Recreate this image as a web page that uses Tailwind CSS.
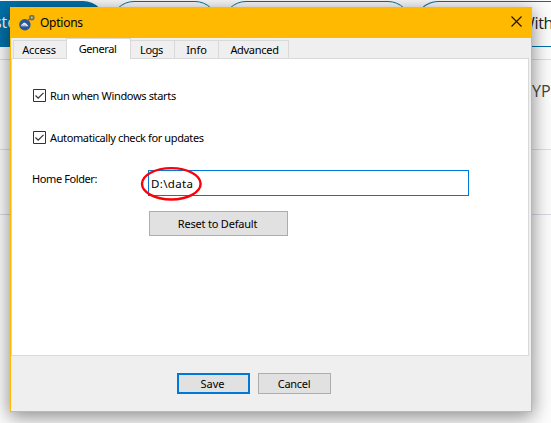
<!DOCTYPE html>
<html lang="en">
<head>
<meta charset="utf-8">
<title>Options</title>
<script src="https://cdn.jsdelivr.net/npm/@tailwindcss/browser@4"></script>
</head>
<body class="relative w-[551px] h-[423px] overflow-hidden bg-white font-['Noto_Sans',sans-serif] text-[11px] leading-4 text-black">
<!-- page behind the dialog -->
<div class="flex flex-col h-full bg-[#fdfdfd] overflow-hidden">
  <div class="flex h-[60px] shrink-0 pt-px border-b border-[#dddfe3] text-base leading-[43px] font-['Open_Sans',sans-serif]">
    <div class="w-[106px] h-[46px] shrink-0 rounded-r-full bg-[#0072ab] text-white overflow-hidden whitespace-nowrap"><span class="block -ml-[25px]">Caste</span></div>
    <div class="w-[107px] h-[46px] shrink-0 ml-[5px] rounded-full border border-[#0072ab]"></div>
    <div class="w-[188px] h-[46px] shrink-0 ml-[5px] rounded-full border border-[#0072ab]"></div>
    <div class="w-[136px] h-[46px] shrink-0 ml-1 rounded-l-full border-y border-l border-[#0072ab] pl-[104px] text-[#222] tracking-[-0.3px]">With</div>
  </div>
  <div class="h-[90px] shrink-0 border-b border-[#dddfe3] pt-[21px] pl-[532px] text-base leading-5 font-['Open_Sans',sans-serif] text-[#444]">YP</div>
  <div class="h-[65px] shrink-0 border-b border-[#d9d9e5]"></div>
  <div class="grow"></div>
</div>

<!-- dialog window -->
<div class="absolute left-[10px] top-[7px] w-[522px] h-[405px] flex flex-col border border-[#ffb900] bg-[#efefef] shadow-[0_4px_18px_1px_rgba(0,0,0,0.45)]">
  <div class="flex items-center h-[30px] shrink-0 bg-[#ffb900] pl-2 pr-[9px]">
    <svg class="w-4 h-4 shrink-0" viewBox="0 0 16 16" fill="none">
      <circle cx="5.9" cy="9.8" r="5.7" fill="#28579b"/>
      <path d="M2.2 10 5 7.4l2.2 1 2.3 2.8H2.5Z" fill="#e9f1fa"/>
      <path d="m2.8 10.9 2-1 1.3.7 1-.6" stroke="#7399c8" stroke-width=".8"/>
      <path d="m8.6 6 2-1.8" stroke="#6d6a50" stroke-width="1.6"/>
      <circle cx="12.8" cy="2.6" r="2" stroke="#66716c" stroke-width="1.7"/>
    </svg>
    <span class="ml-[5px] text-[12px] tracking-[-0.25px]">Options</span>
    <svg class="ml-auto w-[11px] h-[11px] mb-[3px]" viewBox="0 0 11 11" fill="none" stroke="#171200" stroke-width="1.1"><path d="m.5.5 10 10m0-10-10 10"/></svg>
  </div>
  <div class="flex items-end h-5 shrink-0 pl-0.5 text-center whitespace-nowrap">
    <div class="w-[53px] h-[18px] border-t border-l border-[#d9d9d9] leading-[18px] tracking-[-0.1px] pr-0.5">Access</div>
    <div class="relative z-10 w-[65px] h-[21px] -mb-px border-t border-x border-[#d9d9d9] bg-white leading-[20px] tracking-[-0.4px] pr-0.5">General</div>
    <div class="w-[43px] h-[18px] border-t border-[#d9d9d9] leading-[18px] tracking-[-0.35px] pr-0.5">Logs</div>
    <div class="w-[44px] h-[18px] border-t border-l border-[#d9d9d9] leading-[18px] tracking-[-0.1px]">Info</div>
    <div class="w-[71px] h-[18px] border-t border-x border-[#d9d9d9] leading-[18px] tracking-[-0.3px] pl-0.5">Advanced</div>
  </div>
  <div class="h-[298px] shrink-0 mr-[2px] border border-[#d9d9d9] bg-white pl-[21px] pt-[29px]">
    <div class="flex items-center h-[15px]">
      <svg class="w-[13px] h-[13px]" viewBox="0 0 13 13" fill="none" stroke="#333"><path d="M.5.5h12v12H.5z"/><path d="m2.5 6.5 2.7 2.7 5.3-5.4" stroke-width="1.2"/></svg>
      <span class="ml-1 tracking-[-0.34px]">Run when Windows starts</span>
    </div>
    <div class="flex items-center h-[15px] mt-[27px]">
      <svg class="w-[13px] h-[13px]" viewBox="0 0 13 13" fill="none" stroke="#333"><path d="M.5.5h12v12H.5z"/><path d="m2.5 6.5 2.7 2.7 5.3-5.4" stroke-width="1.2"/></svg>
      <span class="ml-1 tracking-[-0.38px]">Automatically check for updates</span>
    </div>
    <div class="flex mt-[25px]">
      <span class="-ml-px w-[116px] mt-px tracking-[-0.4px]">Home Folder:</span>
      <div class="relative w-[321px] h-[26px] border border-[#0078d7] pl-0.5 text-[11.5px] leading-[26px] tracking-[0.35px]">D:\data
        <svg class="absolute -left-[10px] -top-[5px] w-[64px] h-[36px]" viewBox="0 0 64 36" fill="none"><ellipse cx="32.3" cy="17.8" rx="29.3" ry="15.7" stroke="#fa0008" stroke-width="2.4"/></svg>
      </div>
    </div>
    <div class="ml-[116px] mt-[15px] w-[139px] h-[25px] border border-[#adadad] bg-[#e1e1e1] text-center leading-[24px] tracking-[-0.2px] pr-0.5">Reset to Default</div>
  </div>
  <div class="flex pl-[166px] pt-[17px] gap-2 text-center">
    <div class="w-[73px] h-[21px] border-2 border-[#0078d7] bg-[#e1e1e1] leading-[18px] pr-0.5">Save</div>
    <div class="w-[73px] h-[21px] border border-[#adadad] bg-[#e1e1e1] leading-[20px] tracking-[-0.3px] pr-px">Cancel</div>
  </div>
</div>
</body>
</html>
